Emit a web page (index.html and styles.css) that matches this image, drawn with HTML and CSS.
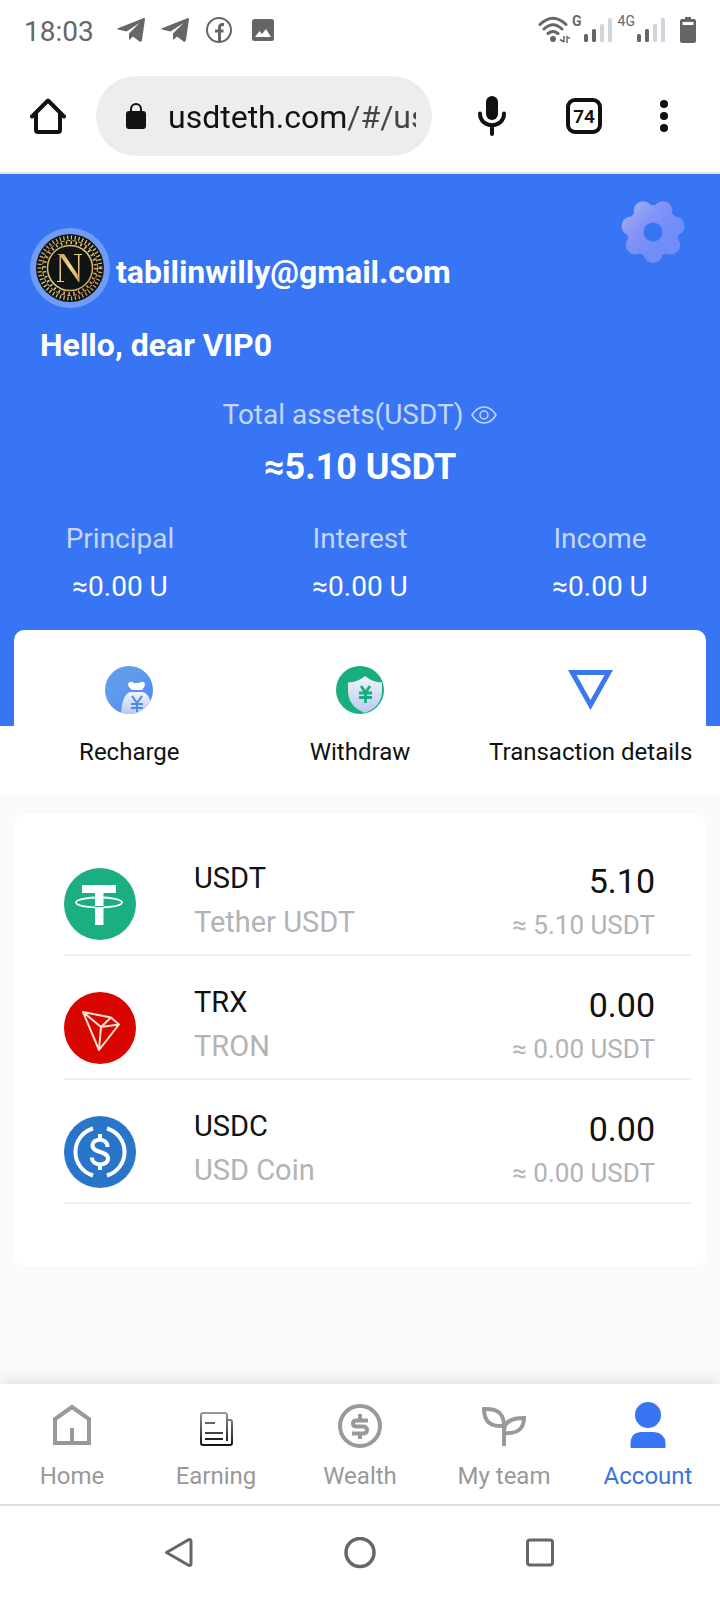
FILE: index.html
```html
<!DOCTYPE html>
<html lang="en">
<head>
<meta charset="utf-8">
<meta name="viewport" content="width=device-width, initial-scale=1">
<title>Account</title>
<link rel="stylesheet" href="styles.css">
</head>
<body>
<div class="status">
  <span class="clock">18:03</span>
  <svg class="s-tg" width="28" height="24" viewBox="0 0 28 24"><path fill="#666" d="M27 0Q28 0 28 1L25 22Q24.600 24.500 22.500 23.500L16 18.500L12.500 21.800Q12 22 12 21V15.500L22.500 5L9.500 13.600L1 11.600Q-.5 11 1 10.200Z"/></svg>
  <svg class="s-tg" width="28" height="24" viewBox="0 0 28 24"><path fill="#666" d="M27 0Q28 0 28 1L25 22Q24.600 24.500 22.500 23.500L16 18.500L12.500 21.800Q12 22 12 21V15.500L22.500 5L9.500 13.600L1 11.600Q-.5 11 1 10.200Z"/></svg>
  <svg class="s-fb" width="26" height="26" viewBox="0 0 26 26"><circle cx="13" cy="13" r="12" fill="none" stroke="#666" stroke-width="2"/><path d="M13.500 25V10.500Q13.500 7.500 16.500 7.500H18M9 14H17.500" fill="none" stroke="#666" stroke-width="3"/></svg>
  <svg class="s-pic" width="22" height="22" viewBox="0 0 22 22"><rect width="22" height="22" rx="2.500" fill="#666"/><path d="M3 18L7.500 12L10 15L14 10L19 18Z" fill="#fff"/></svg>
  <span class="grow"></span>
  <svg width="32" height="28" viewBox="0 0 32 28" fill="none" stroke="#666" stroke-width="3" stroke-linecap="round"><path d="M2 8.500Q15 -4 28 8.500M6 13Q15 4.500 24 13M10 17.500Q15 13.500 20 17.500"/><circle cx="15" cy="23" r="3" fill="#666" stroke="none"/><path stroke-width="1.500" stroke-linecap="butt" d="M26 20V26M22 23.500L26 26M29 27V20M29 20.500L32 22.500"/></svg>
  <span class="net bold">G</span>
  <svg class="bars" width="28" height="26" viewBox="0 0 28 26"><rect y="17" width="4" height="8" rx="1.500" fill="#666"/><rect x="8" y="12" width="4" height="13" rx="1.500" fill="#666"/><rect x="16" y="7" width="4" height="18" rx="1.500" fill="#cfd5df"/><rect x="24" y="1" width="4" height="24" rx="1.500" fill="#cfd5df"/></svg>
  <span class="net">4G</span>
  <svg class="bars" width="28" height="26" viewBox="0 0 28 26"><rect y="17" width="4" height="8" rx="1.500" fill="#666"/><rect x="8" y="12" width="4" height="13" rx="1.500" fill="#666"/><rect x="16" y="7" width="4" height="18" rx="1.500" fill="#cfd5df"/><rect x="24" y="1" width="4" height="24" rx="1.500" fill="#cfd5df"/></svg>
  <svg class="battery" width="16" height="26" viewBox="0 0 16 26"><path fill="#666" fill-rule="evenodd" d="M5 0H11V2H14Q16 2 16 4V24Q16 26 14 26H2Q0 26 0 24V4Q0 2 2 2H5ZM2.500 5V8H13.500V5Z"/></svg>
</div>

<header class="toolbar">
  <button class="tool home" aria-label="Home page"><svg width="36" height="36" viewBox="0 0 36 36" fill="none" stroke="#111" stroke-width="4" stroke-linejoin="round" stroke-linecap="round"><path d="M2 18.500L18 2.500L34 18.500M6 16V32Q6 34 8 34H28Q30 34 30 32V16"/></svg></button>
  <label class="address">
    <svg width="20" height="26" viewBox="0 0 20 26"><rect y="8" width="20" height="18" rx="3" fill="#111"/><path d="M5 9V6A5 5 0 0 1 15 6V9" fill="none" stroke="#111" stroke-width="2"/></svg>
    <input class="url" type="text" value="usdteth.com/#/user" aria-label="Address">
  </label>
  <button class="tool mic" aria-label="Voice search"><svg width="28" height="40" viewBox="0 0 28 40"><rect x="8" width="12" height="24" rx="6" fill="#111"/><path d="M2 17.500C2 33 26 33 26 17.500M14 30V38" fill="none" stroke="#111" stroke-width="4" stroke-linecap="round"/></svg></button>
  <button class="tool"><span class="count">74</span></button>
  <button class="tool more" aria-label="More"><svg width="8" height="32" viewBox="0 0 8 32" fill="#111"><circle cx="4" cy="4" r="4"/><circle cx="4" cy="16" r="4"/><circle cx="4" cy="28" r="4"/></svg></button>
</header>

<main class="page">
  <div class="overview">
    <section class="hero">
      <div class="profile">
        <svg class="avatar" width="80" height="80" viewBox="0 0 80 80">
          <defs><linearGradient id="gold" x1="0" y1="0" x2="1" y2="1"><stop offset="0" stop-color="#c9a25b"/><stop offset=".5" stop-color="#f0d88a"/><stop offset="1" stop-color="#c98a4e"/></linearGradient></defs>
          <circle cx="40" cy="40" r="40" fill="#709bf7"/><circle cx="40" cy="40" r="34" fill="#101412"/>
          <g fill="none" stroke="url(#gold)"><circle cx="40" cy="40" r="22.500" stroke-width="1.500"/><circle cx="40" cy="40" r="25.500" stroke-width="3" stroke-dasharray="1.500 3.500"/><circle cx="40" cy="40" r="27.500" stroke-dasharray="4 2"/><circle cx="40" cy="40" r="30.500" stroke-width="4" stroke-dasharray="1.200 2.600"/></g>
          <path fill="url(#gold)" d="M28 26H34L48 47V27H44V26H52V27H49.500V54H48.500L31 29V53H34V54H27V53H29.500V27H28Z"/>
        </svg>
        <span class="email">tabilinwilly@gmail.com</span>
        <button class="gear" aria-label="Settings"><svg width="66" height="64" viewBox="0 0 66 64">
          <defs><linearGradient id="gg" gradientUnits="userSpaceOnUse" x1="8" y1="8" x2="40" y2="40"><stop offset="0" stop-color="#9dacf4"/><stop offset=".5" stop-color="#8493f6"/><stop offset="1" stop-color="#718df7"/></linearGradient></defs>
          <g fill="url(#gg)"><circle cx="33" cy="31" r="26"/><circle cx="33" cy="53.500" r="9.500"/><circle cx="50.600" cy="45" r="9.500"/><circle cx="55" cy="26" r="9.500"/><circle cx="42.800" cy="10.700" r="9.500"/><circle cx="23.200" cy="10.700" r="9.500"/><circle cx="11" cy="26" r="9.500"/><circle cx="15.400" cy="45" r="9.500"/></g><circle cx="33" cy="32" r="9.500" fill="#3875f5"/></svg></button>
      </div>
      <h1 class="hello">Hello, dear VIP0</h1>
      <div class="total">Total assets(USDT) <button class="eye" aria-label="Hide amounts"><svg width="26" height="18" viewBox="0 0 26 18" fill="none" stroke="#c3d6fc" stroke-width="1.500"><path d="M1 9Q6 1 13 1T25 9Q20 17 13 17T1 9Z"/><circle cx="13" cy="9" r="4"/></svg></button></div>
      <div class="sum">≈5.10 USDT</div>
      <dl class="stats">
        <div><dt>Principal</dt><dd>≈0.00 U</dd></div>
        <div><dt>Interest</dt><dd>≈0.00 U</dd></div>
        <div><dt>Income</dt><dd>≈0.00 U</dd></div>
      </dl>
    </section>
    <nav class="actions">
      <button class="action"><svg width="48" height="48" viewBox="0 0 48 48">
        <defs><clipPath id="disc"><circle cx="24" cy="24" r="24"/></clipPath><linearGradient id="blue" x1="0" y1="0" x2="1" y2="1"><stop offset=".4" stop-color="#5f9cec"/><stop offset="1" stop-color="#4a83f3"/></linearGradient><linearGradient id="pale" x1="0" y1="0" x2="0" y2="1"><stop offset="0" stop-color="#f1f4fa"/><stop offset="1" stop-color="#b7cbee"/></linearGradient></defs>
        <circle cx="24" cy="24" r="24" fill="url(#blue)"/><g clip-path="url(#disc)"><path fill="#fff" d="M23 18Q24 15 27 16Q29 17.500 31.500 17Q34 17.500 36 16Q39 15 40 18Q40 21 37 24H27Q23 21 23 18Z"/><path fill="url(#pale)" d="M25 26H38Q46 28 48 48H16Q17 29 25 26Z"/><path d="M27 30L32 37L37 30M32 37V46M26 38H38M26 42H38" fill="none" stroke="#4f87ee" stroke-width="2"/></g></svg><span>Recharge</span></button>
      <button class="action"><svg width="48" height="48" viewBox="0 0 48 48"><circle cx="24" cy="24" r="24" fill="#18ae80"/><path clip-path="url(#disc)" fill="url(#pale)" d="M29 10Q36 16 46 16.500V26Q45 41 29 47Q13 41 12 26V16.500Q22 16 29 10Z"/><path d="M25 20L29.500 26.500L34 20M29.500 26V37M23 27H36M23 31.500H36" fill="none" stroke="#18ae80" stroke-width="2.800"/></svg><span>Withdraw</span></button>
      <button class="action"><svg width="48" height="48" viewBox="0 0 48 48"><path fill="#3b78ee" fill-rule="evenodd" d="M1 4H46L23.500 44ZM9.500 9L23.500 34L37.500 9Z"/></svg><span>Transaction details</span></button>
    </nav>
  </div>

  <ul class="assets">
    <li class="asset">
      <svg class="coin" width="72" height="72" viewBox="0 0 72 72"><circle cx="36" cy="36" r="36" fill="#1aae82"/><path fill="#fff" d="M18 17H52V25H39.500V57H31V25H18Z"/><ellipse cx="35" cy="34.500" rx="23" ry="5" fill="none" stroke="#fff" stroke-width="1.800"/><path d="M31 38.500H39.500" stroke="#1aae82"/></svg>
      <div class="names"><div class="code">USDT</div><div class="name">Tether USDT</div></div>
      <div class="amounts"><div class="qty">5.10</div><div class="worth">≈ 5.10 USDT</div></div>
    </li>
    <li class="asset">
      <svg class="coin" width="72" height="72" viewBox="0 0 72 72"><circle cx="36" cy="36" r="36" fill="#d90500"/><path fill="none" stroke="#fbe3cf" stroke-width="2" stroke-linejoin="round" d="M19 20L47 25.500L55 32.500L35 58ZM19 20L37 35L35 58M37 35L47 25.500M37 35L55 32.500"/></svg>
      <div class="names"><div class="code">TRX</div><div class="name">TRON</div></div>
      <div class="amounts"><div class="qty">0.00</div><div class="worth">≈ 0.00 USDT</div></div>
    </li>
    <li class="asset">
      <svg class="coin" width="72" height="72" viewBox="0 0 72 72"><circle cx="36" cy="36" r="36" fill="#2975ca"/><g fill="none" stroke="#fff" stroke-width="4"><path d="M29 12.500A24.500 24.500 0 0 0 29 59.500M43 12.500A24.500 24.500 0 0 1 43 59.500"/><path d="M43.500 31C43.500 21.500 28.500 21.500 28.500 29.500C28.500 37.500 44 34.500 44 42.500C44 50.500 28 50.500 28 41.500M36 18V24M36 48V54"/></g></svg>
      <div class="names"><div class="code">USDC</div><div class="name">USD Coin</div></div>
      <div class="amounts"><div class="qty">0.00</div><div class="worth">≈ 0.00 USDT</div></div>
    </li>
  </ul>
</main>

<nav class="tabs">
  <a class="tab" href="#home"><svg width="48" height="48" viewBox="0 0 48 48" fill="none" stroke="#999" stroke-width="4"><path d="M7 41V17L24 5L41 17V41ZM24 41V26"/></svg><span>Home</span></a>
  <a class="tab" href="#earning"><svg width="48" height="48" viewBox="0 0 48 48" fill="none" stroke-width="2"><defs><linearGradient id="ink" gradientUnits="userSpaceOnUse" x1="0" y1="10" x2="0" y2="44"><stop offset="0" stop-color="#999"/><stop offset=".5" stop-color="#555"/><stop offset="1" stop-color="#111"/></linearGradient></defs><g stroke="url(#ink)"><path d="M38 43H11Q9 43 9 41V13Q9 11 11 11H33Q35 11 35 13V39M36 18H38Q40 18 40 20V41Q40 43 38 43"/></g><path d="M13 21H23" stroke="#666"/><path d="M13 31H31" stroke="#444"/><path d="M13 37H31" stroke="#222"/></svg><span>Earning</span></a>
  <a class="tab" href="#wealth"><svg width="48" height="48" viewBox="0 0 48 48" fill="none" stroke="#999" stroke-width="4"><circle cx="24" cy="24" r="20"/><path d="M32 18.500H21Q17 18.500 17 21.500T21 24.500H27Q31 24.500 31 28T27 31.500H16M24 12V18M24 31V37"/></svg><span>Wealth</span></a>
  <a class="tab" href="#team"><svg width="48" height="48" viewBox="0 0 48 48" fill="none" stroke="#999" stroke-width="4"><path d="M24 44V24C24 12 18 6 4 7C4 20 11 25 24 24M24 31V29C24 20 31 16 44 16C44 27 37 32 24 31"/></svg><span>My team</span></a>
  <a class="tab current" href="#account"><svg width="48" height="48" viewBox="0 0 48 48" fill="#3875f5"><circle cx="24" cy="13" r="13"/><path d="M6.500 46V41Q7 30 18 30H30Q41 31 41.500 41V46Z"/></svg><span>Account</span></a>
</nav>
<div class="system">
  <button aria-label="Back"><svg width="32" height="32" viewBox="0 0 32 32" fill="none" stroke="#666" stroke-width="3" stroke-linejoin="round"><path d="M2.500 15.500L25 2.500Q27 2.500 27 4.500V26.500Q27 28.500 25 28.500Z"/></svg></button>
  <button aria-label="Home screen"><svg width="32" height="32" viewBox="0 0 32 32" fill="none" stroke="#666" stroke-width="3.500"><circle cx="16" cy="15.500" r="14"/></svg></button>
  <button aria-label="Recent apps"><svg width="32" height="32" viewBox="0 0 32 32" fill="none" stroke="#666" stroke-width="3"><rect x="3.500" y="3" width="25" height="25" rx="2.500"/></svg></button>
</div>
</body>
</html>
```
FILE: styles.css
```css
* { box-sizing: border-box; }
body {
  margin: 0;
  min-height: 100vh;
  display: flex;
  flex-direction: column;
  background: #fff;
  color: #111;
  font-family: Roboto, "Noto Sans", sans-serif;
  font-size: 28px;
}
svg { display: block; flex: none; }
button {
  border: 0;
  padding: 0;
  background: none;
  color: inherit;
  font: inherit;
}
a { color: inherit; text-decoration: none; }
ul, dl, dd, h1 { margin: 0; padding: 0; }

.status {
  display: flex;
  align-items: center;
  height: 60px;
  padding: 0 24px;
  color: #666;
}
.clock { margin-right: 7px; padding-top: 2px; }
.s-tg { margin-left: 16px; }
.s-fb { margin-left: 17px; }
.s-pic { margin-left: 20px; }
.grow { flex: 1; }
.net {
  align-self: flex-start;
  margin: 12px 0 0 2px;
  font-size: 14px;
  line-height: 18px;
}
.net.bold { font-weight: 700; }
.bars { margin-left: 2px; }
.net + .bars { margin-right: 4px; }
.battery { margin-left: 11px; }

.toolbar {
  display: flex;
  align-items: center;
  padding: 16px 22px 16px 0;
  border-bottom: 2px solid #dfe3e5;
}
.tool { display: grid; place-items: center; width: 92px; height: 80px; }
.tool.home { width: 96px; }
.tool.mic { margin-left: 14px; }
.tool.more { width: 68px; }
.address {
  flex: 1;
  min-width: 0;
  display: flex;
  align-items: center;
  gap: 22px;
  height: 80px;
  padding: 0 16px 0 30px;
  border-radius: 40px;
  background: #ecedef;
}
.url {
  flex: 1;
  min-width: 0;
  padding: 2px 0 0;
  border: 0;
  outline: 0;
  background: linear-gradient(to right, #111 178px, #444 178px);
  background-clip: text;
  -webkit-text-fill-color: transparent;
  font: 32px/40px Roboto, "Noto Sans", sans-serif;
}
.count {
  display: grid;
  place-items: center;
  width: 36px;
  height: 36px;
  border: 4px solid #111;
  border-radius: 9px;
  font-size: 19px;
  font-weight: 600;
}

.page { flex: 1; background: #fafafa; }
.overview { background: #fff; }
.hero {
  padding: 26px 0 119px;
  background: #3875f5;
  color: #fff;
  text-align: center;
}
.profile {
  display: flex;
  align-items: flex-end;
  padding: 0 34px 0 30px;
}
.avatar { margin-top: 28px; }
.email {
  flex: 1;
  padding-left: 6px;
  text-align: left;
  font-size: 32px;
  font-weight: 700;
  line-height: 72px;
}
.gear { align-self: flex-start; }
.hello {
  margin-top: 17px;
  padding-left: 40px;
  text-align: left;
  font-size: 32px;
  line-height: 40px;
}
.total {
  display: flex;
  justify-content: center;
  align-items: center;
  gap: 8px;
  margin-top: 30px;
  line-height: 40px;
  color: #c3d6fc;
}
.sum {
  margin-top: 10px;
  font-size: 36px;
  font-weight: 700;
  line-height: 44px;
}
.stats {
  display: grid;
  grid-template-columns: repeat(3, 1fr);
  margin-top: 30px;
  line-height: 40px;
}
.stats dt { color: #c3d6fc; }
.stats dd { margin-top: 8px; }

.actions {
  position: relative;
  display: grid;
  grid-template-columns: repeat(3, 1fr);
  margin: -96px 14px 0;
  padding: 36px 0 28px;
  border-radius: 10px 10px 0 0;
  background: #fff;
}
.action {
  display: flex;
  flex-direction: column;
  align-items: center;
  gap: 22px;
  font-size: 24px;
  line-height: 32px;
}

.assets {
  margin: 18px 14px 0;
  padding: 18px 15px 62px 50px;
  border-radius: 10px;
  background: #fff;
  list-style: none;
}
.asset {
  display: flex;
  align-items: flex-end;
  padding: 24px 36px 10px 0;
  border-bottom: 2px solid #eef0f0;
}
.coin { margin-bottom: 4px; }
.names {
  flex: 1;
  padding-left: 58px;
  font-size: 29px;
  line-height: 44px;
}
.name, .worth { color: #b3b3b3; }
.amounts { text-align: right; }
.qty { font-size: 34px; line-height: 50px; }
.worth { font-size: 26px; line-height: 38px; }

.tabs {
  position: relative;
  display: grid;
  grid-template-columns: repeat(5, 1fr);
  padding: 18px 0 12px;
  background: #fff;
  box-shadow: 0 -2px 16px rgba(0, 0, 0, .12);
  color: #999;
  font-size: 24px;
  line-height: 32px;
}
.tab {
  display: flex;
  flex-direction: column;
  align-items: center;
  gap: 10px;
}
.tab.current { color: #3a73e0; }
.system {
  position: relative;
  display: grid;
  grid-template-columns: repeat(3, 1fr);
  place-items: center;
  height: 96px;
  padding: 0 90px;
  border-top: 2px solid #dfdfdf;
  background: #fff;
}
```
